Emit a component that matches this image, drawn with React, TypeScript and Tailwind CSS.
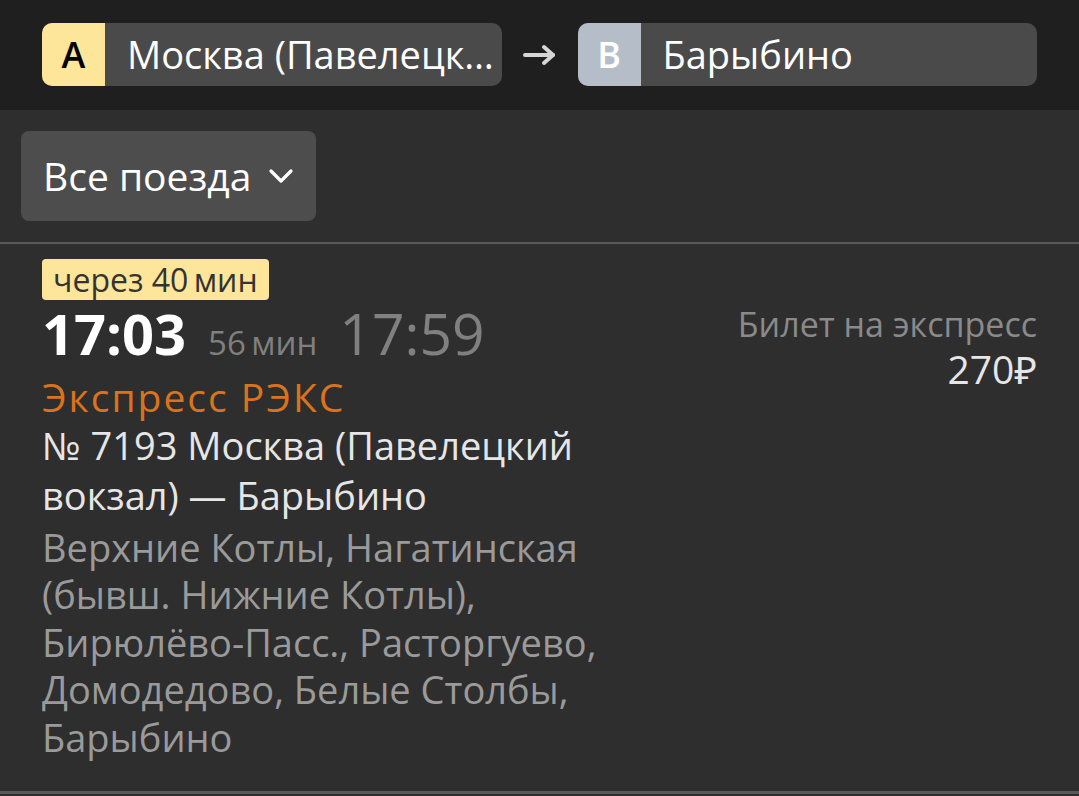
const font = { fontFamily: '"Open Sans", "Noto Sans", sans-serif' }

const Arrow = () => (
  <svg width="34" height="22" viewBox="0 0 34 22" fill="none" stroke="#d6d6d6" strokeWidth="4" strokeLinecap="round" strokeLinejoin="round">
    <path d="M2 11h28" />
    <path d="M21 3l9 8-9 8" />
  </svg>
)

const Chevron = () => (
  <svg width="26" height="16" viewBox="0 0 26 16" fill="none" stroke="#ffffff" strokeWidth="3.2" strokeLinecap="round" strokeLinejoin="round">
    <path d="M3 3l10 10 10-10" />
  </svg>
)

const Point = ({ letter, label, name }: { letter: string; label: string; name: string }) => (
  <div className="flex h-[63px] min-w-0 flex-1 overflow-hidden rounded-[10px] bg-[#4a4a4a]">
    <div className={`flex w-[63px] shrink-0 items-center justify-center text-[36px] font-semibold ${label}`}>
      {letter}
    </div>
    <div className="min-w-0 flex-1 truncate pl-[22px] pr-[4px] text-[38px] leading-[63px] text-white">{name}</div>
  </div>
)

export default function App() {
  return (
    <div className="h-[796px] w-[1079px] overflow-hidden bg-[#2e2e2e]" style={font}>
      {/* Header */}
      <div className="flex h-[110px] items-start gap-[21px] bg-[#1f1f1f] px-[42px] pt-[23px]">
        <Point letter="A" label="bg-[#fde59a] text-black" name="Москва (Павелецкий вокзал)" />
        <div className="flex h-[63px] shrink-0 items-center">
          <Arrow />
        </div>
        <Point letter="B" label="bg-[#b5bec8] text-white" name="Барыбино" />
      </div>

      {/* Filter */}
      <div className="p-[21px]">
        <button className="flex h-[90px] items-center gap-[17px] rounded-[8px] bg-[#4d4d4d] pl-[22px] pr-[22px] text-[39px] text-white">
          <span>Все поезда</span>
          <Chevron />
        </button>
      </div>

      <div className="h-[2px] bg-[#595959]" />

      {/* Train */}
      <div className="flex h-[547px] justify-between px-[42px] pt-[15px]">
        <div>
          <div className="inline-block rounded-[4px] bg-[#fde59a] px-[11px] text-[32px] leading-[41px] text-[#333333]">
            через 40&#8201;мин
          </div>
          <div className="mt-[3px] flex items-baseline">
            <span className="text-[56px] font-bold leading-[60px] text-white">17:03</span>
            <span className="ml-[22px] text-[33px] text-[#808080]">56&#8201;мин</span>
            <span className="ml-[22px] text-[57px] leading-[60px] text-[#808080]">17:59</span>
          </div>
          <div className="mt-[6px] text-[39px] leading-[46px] tracking-[2px] text-[#d9731c]">Экспресс РЭКС</div>
          <div className="w-[600px] text-[38px] leading-[50px] text-[#e6e6e6]">
            № 7193 Москва (Павелецкий вокзал) — Барыбино
          </div>
          <div className="mt-[4px] w-[600px] text-[38px] leading-[47.5px] text-[#9a9a9a]">
            Верхние Котлы, Нагатинская (бывш. Нижние Котлы), Бирюлёво-Пасс., Расторгуево, Домодедово, Белые Столбы, Барыбино
          </div>
        </div>
        <div className="pt-[43px] text-right">
          <div className="text-[34px] leading-[44px] text-[#8a8a8a]">Билет на экспресс</div>
          <div className="text-[39px] leading-[46px] text-[#e6e6e6]">270₽</div>
        </div>
      </div>
      <div className="h-[3px] bg-[#595959]" />
    </div>
  )
}
